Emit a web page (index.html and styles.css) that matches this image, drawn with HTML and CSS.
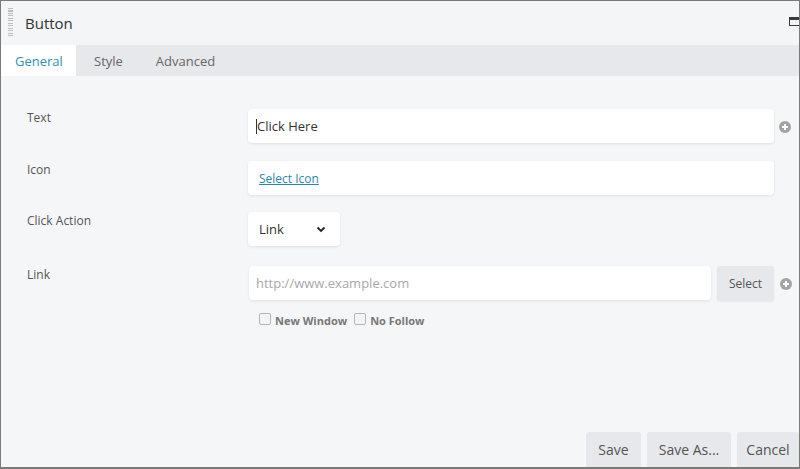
FILE: index.html
```html
<!DOCTYPE html>
<html>
<head>
<meta charset="utf-8">
<link rel="stylesheet" href="styles.css">
</head>
<body>
<div class="panel">
  <div class="header">
    <span class="handle"></span>
    <span class="title">Button</span>
    <span class="maximize"></span>
  </div>
  <div class="tabs">
    <span class="tab active">General</span>
    <span class="tab">Style</span>
    <span class="tab">Advanced</span>
  </div>
  <div class="body">
    <div class="row r1">
      <div class="label">Text</div>
      <div class="field wide"><span class="caret"></span>Click Here</div>
      <span class="plus"></span>
    </div>
    <div class="row r2">
      <div class="label">Icon</div>
      <div class="field wide"><a class="link" href="#">Select Icon</a></div>
    </div>
    <div class="row r3">
      <div class="label">Click Action</div>
      <div class="field select">Link
        <svg class="chev" width="10" height="7" viewBox="0 0 10 7"><path d="M1.5 1.5 L5 5 L8.5 1.5" fill="none" stroke="#222" stroke-width="1.8"/></svg>
      </div>
    </div>
    <div class="row r4 link-row">
      <div class="label">Link</div>
      <div class="link-group">
        <div class="link-line">
          <div class="field url">http://www.example.com</div>
          <span class="btn-select">Select</span>
        </div>
        <div class="checks">
          <label class="check"><span class="box"></span>New Window</label>
          <label class="check"><span class="box"></span>No Follow</label>
        </div>
      </div>
      <span class="plus"></span>
    </div>
  </div>
  <div class="footer">
    <span class="btn save">Save</span>
    <span class="btn saveas">Save As...</span>
    <span class="btn cancel">Cancel</span>
  </div>
</div>
</body>
</html>
```
FILE: styles.css
```css
html, body {
  margin: 0;
  padding: 0;
}
body {
  width: 800px;
  height: 469px;
  overflow: hidden;
  font-family: "Open Sans", "Noto Sans", sans-serif;
  color: #555;
  background: #f5f6f8;
}
.panel {
  box-sizing: border-box;
  width: 800px;
  height: 469px;
  border: 1px solid #7a7a7a;
  border-bottom-width: 2px;
  display: flex;
  flex-direction: column;
  background: #f5f6f8;
  overflow: hidden;
}
.header {
  height: 44px;
  display: flex;
  align-items: center;
  background: #f4f5f7;
  flex-shrink: 0;
}
.handle {
  width: 5px;
  height: 29px;
  margin-left: 7px;
  margin-top: -2px;
  background: repeating-linear-gradient(to bottom, #b9bcc1 0, #b9bcc1 1px, transparent 1px, transparent 2.5px);
}
.title {
  margin-left: 12px;
  font-size: 15px;
  color: #333;
  flex: 1;
}
.maximize {
  box-sizing: border-box;
  width: 12px;
  height: 9px;
  border: 1.5px solid #3a3a3a;
  border-top-width: 3px;
  margin-right: -2px;
  margin-top: -3px;
}
.tabs {
  height: 31px;
  display: flex;
  background: #e6e8eb;
  flex-shrink: 0;
}
.tab {
  font-size: 13px;
  line-height: 31px;
  padding: 1px 15px 0 18px;
  color: #666;
}
.tab.active {
  background: #fff;
  color: #2e91b3;
  width: 75px;
  box-sizing: border-box;
  padding: 1px 0 0 14px;
}
.body {
  flex: 1;
  padding: 33px 0 0 26px;
  display: flex;
  flex-direction: column;
}
.row {
  display: flex;
  align-items: flex-start;
}
.r2 { margin-top: 18px; }
.r3 { margin-top: 17px; }
.r4 { margin-top: 20px; }
.label {
  width: 221px;
  font-size: 12px;
  line-height: 17px;
  color: #555;
  flex-shrink: 0;
}
.field {
  box-sizing: border-box;
  height: 34px;
  background: #fff;
  border-radius: 4px;
  box-shadow: 0 1px 3px rgba(0,0,0,0.09);
  display: flex;
  align-items: center;
  font-size: 13px;
  color: #333;
}
.wide {
  width: 526px;
  padding-left: 8px;
}
.caret {
  width: 1px;
  height: 15px;
  background: #333;
}
.link {
  font-size: 12px;
  color: #2a87ad;
  text-decoration: underline;
  margin-left: 3px;
}
.plus {
  width: 12px;
  height: 12px;
  border-radius: 50%;
  background: #a3a3a3;
  margin: 12px 0 0 5px;
  position: relative;
  flex-shrink: 0;
}
.plus::before, .plus::after {
  content: "";
  position: absolute;
  background: #fff;
}
.plus::before {
  left: 3px;
  top: 5px;
  width: 6px;
  height: 2px;
}
.plus::after {
  left: 5px;
  top: 3px;
  width: 2px;
  height: 6px;
}
.select {
  width: 92px;
  padding: 0 14px 0 11px;
  justify-content: space-between;
}
.link-group {
  display: flex;
  flex-direction: column;
}
.link-line {
  display: flex;
  gap: 6px;
}
.url {
  width: 462px;
  padding-left: 7px;
  color: #a8a8a8;
  margin-left: 1px;
}
.btn-select {
  box-sizing: border-box;
  width: 57px;
  height: 35px;
  background: #e6e8eb;
  border-radius: 3px;
  font-size: 12px;
  color: #555;
  display: flex;
  align-items: center;
  justify-content: center;
  box-shadow: 0 1px 2px rgba(0,0,0,0.06);
}
.link-row .plus {
  margin-top: 12px;
  margin-left: 6px;
}
.checks {
  display: flex;
  gap: 7px;
  margin-top: 12px;
  padding-left: 11px;
}
.check {
  display: flex;
  align-items: center;
  gap: 4px;
  font-size: 11px;
  font-weight: bold;
  color: #777;
}
.box {
  box-sizing: border-box;
  width: 12px;
  height: 12px;
  border: 1px solid #b5b5b5;
  border-radius: 2px;
  background: #f4f4f4;
  margin-top: -3px;
}
.footer {
  display: flex;
  justify-content: flex-end;
  gap: 6px;
  flex-shrink: 0;
}
.btn {
  box-sizing: border-box;
  height: 35px;
  background: #e6e8eb;
  font-size: 14px;
  color: #555;
  display: flex;
  align-items: center;
  justify-content: center;
  border-radius: 3px 3px 0 0;
}
.save { width: 55px; }
.saveas { width: 84px; }
.cancel { width: 62px; }
```
